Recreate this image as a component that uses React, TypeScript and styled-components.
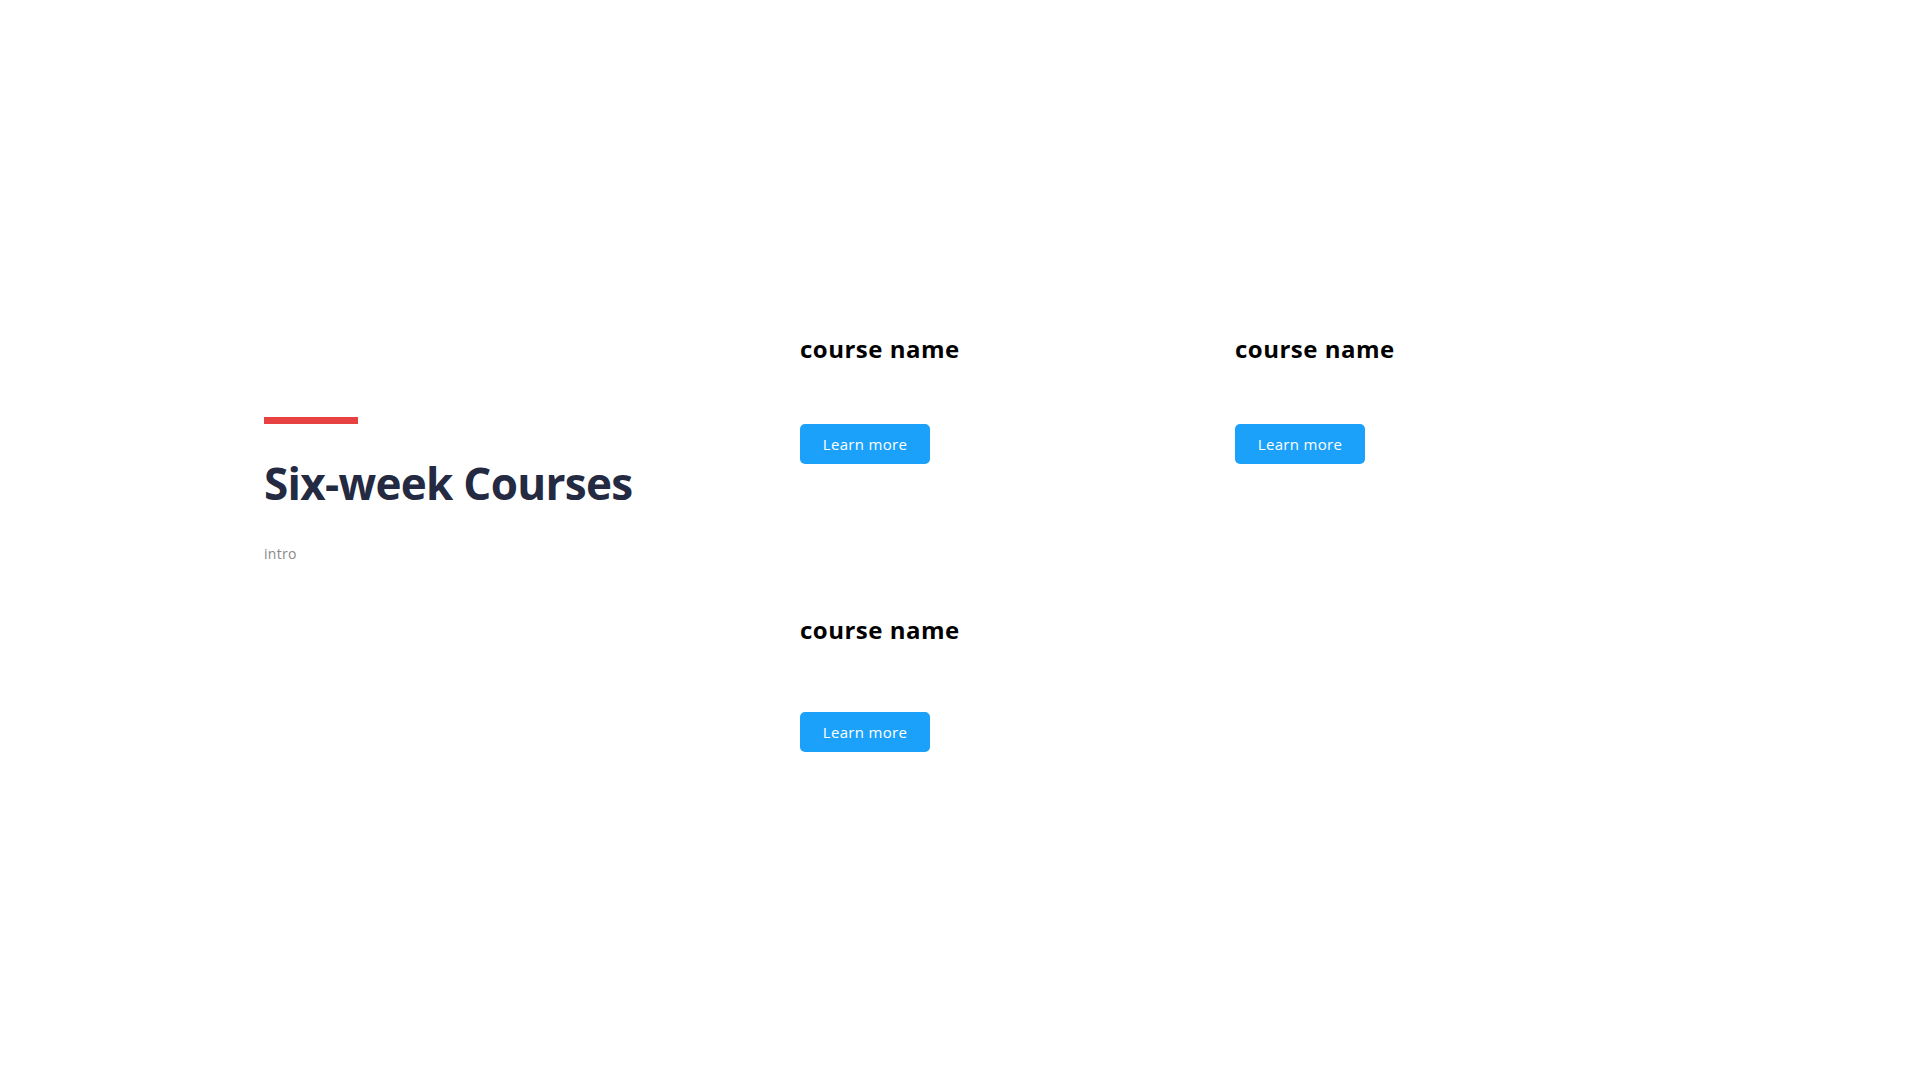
import React from "react";
import styled, { createGlobalStyle } from "styled-components";

const GlobalStyle = createGlobalStyle`
  html, body {
    margin: 0;
    padding: 0;
    background: #ffffff;
    font-family: "Open Sans", "Liberation Sans", sans-serif;
  }
`;

const Page = styled.main`
  min-height: 1080px;
  box-sizing: border-box;
  padding: 335px 0 0 264px;
  display: flex;
  align-items: flex-start;
`;

const Intro = styled.section`
  width: 536px;
  padding-top: 82px;
  display: flex;
  flex-direction: column;
  align-items: flex-start;
`;

const Accent = styled.div`
  width: 94px;
  height: 7px;
  background: #e84142;
`;

const Title = styled.h1`
  margin: 33px 0 0;
  font-size: 44px;
  line-height: 1.2;
  font-weight: 700;
  color: #232a42;
  letter-spacing: -0.7px;
`;

const IntroText = styled.p`
  margin: 33px 0 0;
  font-size: 14px;
  line-height: 1.5;
  color: #8a8a8a;
  letter-spacing: 0.3px;
`;

const CourseGrid = styled.div`
  display: grid;
  grid-template-columns: 435px 435px;
  grid-template-rows: 129px 136px;
  row-gap: 152px;
`;

const Card = styled.article`
  display: flex;
  flex-direction: column;
  justify-content: space-between;
  align-items: flex-start;
`;

const CourseName = styled.h2`
  margin: 0;
  font-size: 24px;
  line-height: 1.2;
  font-weight: 700;
  color: #000000;
  letter-spacing: 0.5px;
`;

const LearnButton = styled.button`
  width: 130px;
  height: 40px;
  border: none;
  border-radius: 5px;
  background: #1ca1fb;
  color: #ffffff;
  font-family: "Open Sans", "Liberation Sans", sans-serif;
  font-size: 15px;
  letter-spacing: 0.3px;
  cursor: pointer;
  padding: 0;
`;

const courses = ["course name", "course name", "course name"];

export default function App() {
  return (
    <>
      <GlobalStyle />
      <Page>
        <Intro>
          <Accent />
          <Title>Six-week Courses</Title>
          <IntroText>intro</IntroText>
        </Intro>
        <CourseGrid>
          {courses.map((name, i) => (
            <Card key={i}>
              <CourseName>{name}</CourseName>
              <LearnButton>Learn more</LearnButton>
            </Card>
          ))}
        </CourseGrid>
      </Page>
    </>
  );
}
